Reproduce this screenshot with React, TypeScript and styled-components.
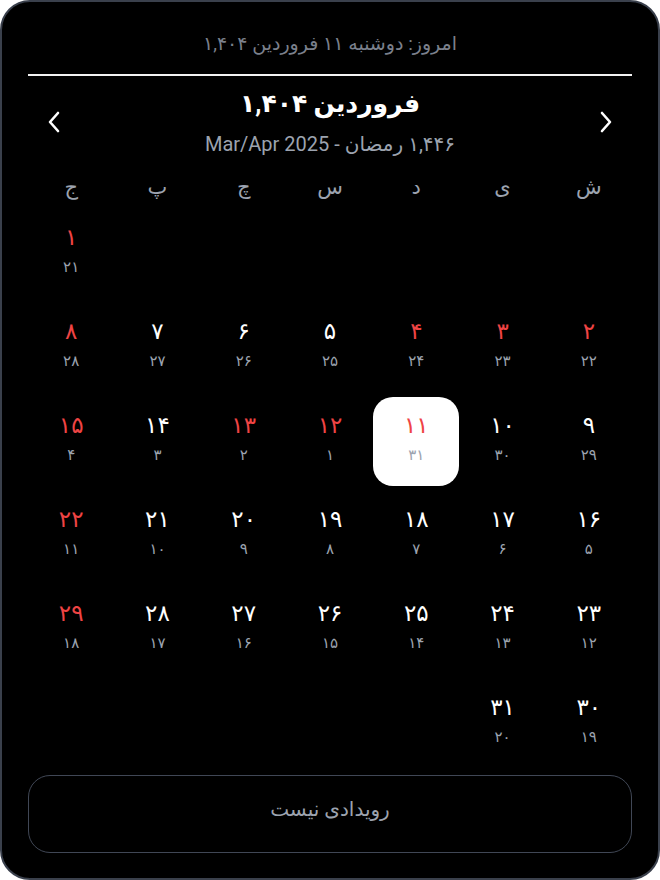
import React from "react";
import styled, { createGlobalStyle } from "styled-components";

const GlobalStyle = createGlobalStyle`
  body {
    margin: 0;
    background: #ffffff;
    font-family: Roboto, "Noto Sans", "DejaVu Sans", sans-serif;
  }
`;

const Frame = styled.div`
  box-sizing: border-box;
  width: 660px;
  height: 880px;
  padding: 0 26px;
  background: #000000;
  border: 2px solid #3a404c;
  border-radius: 30px;
  direction: rtl;
  display: flex;
  flex-direction: column;
  color: #ffffff;
`;

const TodayText = styled.div`
  margin-top: 30px;
  line-height: 24px;
  font-size: 19px;
  text-align: center;
  color: #7b808c;
`;

const Divider = styled.div`
  margin-top: 18px;
  height: 2px;
  background: #f2f2f2;
`;

const MonthBar = styled.div`
  margin-top: 11px;
  display: flex;
  align-items: center;
  justify-content: space-between;
  padding: 0 16px;
`;

const NavButton = styled.button`
  width: 20px;
  height: 28px;
  padding: 0;
  border: none;
  background: transparent;
  display: flex;
  align-items: center;
  justify-content: center;
  cursor: pointer;
`;

const MonthTitle = styled.div`
  display: flex;
  flex-direction: column;
  align-items: center;
`;

const TitleText = styled.div`
  font-size: 25px;
  font-weight: 700;
  line-height: 34px;
`;

const SubText = styled.div`
  margin-top: 10px;
  font-size: 20px;
  line-height: 26px;
  color: #9ca3af;
`;

const Weekdays = styled.div`
  margin-top: 16px;
  display: grid;
  grid-template-columns: repeat(7, 1fr);
`;

const Weekday = styled.div`
  text-align: center;
  font-size: 21px;
  line-height: 28px;
  color: #9ca3af;
`;

const Grid = styled.div`
  margin-top: 8px;
  display: grid;
  grid-template-columns: repeat(7, 1fr);
  grid-auto-rows: 89px;
  row-gap: 5px;
`;

const Cell = styled.div<{ $today?: boolean; $col: number }>`
  grid-column: ${({ $col }) => $col};
  display: flex;
  flex-direction: column;
  align-items: center;
  justify-content: center;
  gap: 4px;
  padding-bottom: 6px;
  box-sizing: border-box;
  border-radius: 20px;
  background: ${({ $today }) => ($today ? "#ffffff" : "transparent")};
`;

const DayNum = styled.div<{ $holiday?: boolean }>`
  font-size: 23px;
  font-weight: 500;
  line-height: 28px;
  color: ${({ $holiday }) => ($holiday ? "#ef4444" : "#ffffff")};
`;

const GregNum = styled.div`
  font-size: 15px;
  line-height: 22px;
  color: #9ca3af;
`;

const EventBox = styled.div`
  margin-top: 7px;
  height: 78px;
  padding-bottom: 10px;
  box-sizing: border-box;
  border: 1.5px solid #404755;
  border-radius: 22px;
  display: flex;
  align-items: center;
  justify-content: center;
  font-size: 20px;
  color: #9ca3af;
`;

const fa = (n: number) => String(n).replace(/\d/g, (d) => "۰۱۲۳۴۵۶۷۸۹"[+d]);

const WEEKDAYS = ["ش", "ی", "د", "س", "چ", "پ", "ج"];
const HOLIDAYS = [1, 2, 3, 4, 8, 11, 12, 13, 15, 22, 29];
const START = 6; // 1 Farvardin falls on Friday

const Chevron = ({ dir }: { dir: "left" | "right" }) => (
  <svg width="14" height="24" viewBox="0 0 14 24" fill="none">
    <path
      d={dir === "left" ? "M11 3 L3 12 L11 21" : "M3 3 L11 12 L3 21"}
      stroke="#ffffff"
      strokeWidth="2.6"
      strokeLinecap="round"
      strokeLinejoin="round"
    />
  </svg>
);

export default function App() {
  const days = Array.from({ length: 31 }, (_, i) => i + 1);

  return (
    <>
      <GlobalStyle />
      <Frame>
        <TodayText>امروز: دوشنبه ۱۱ فروردین ۱,۴۰۴</TodayText>
        <Divider />
        <MonthBar>
          <NavButton>
            <Chevron dir="right" />
          </NavButton>
          <MonthTitle>
            <TitleText>فروردین ۱,۴۰۴</TitleText>
            <SubText>
              ۱,۴۴۶ رمضان - <span dir="ltr">Mar/Apr 2025</span>
            </SubText>
          </MonthTitle>
          <NavButton>
            <Chevron dir="left" />
          </NavButton>
        </MonthBar>
        <Weekdays>
          {WEEKDAYS.map((w) => (
            <Weekday key={w}>{w}</Weekday>
          ))}
        </Weekdays>
        <Grid>
          {days.map((d) => {
            const col = ((START + d - 1) % 7) + 1;
            const greg = d <= 11 ? 20 + d : d - 11;
            return (
              <Cell key={d} $col={col} $today={d === 11}>
                <DayNum $holiday={HOLIDAYS.includes(d)}>{fa(d)}</DayNum>
                <GregNum>{fa(greg)}</GregNum>
              </Cell>
            );
          })}
        </Grid>
        <EventBox>رویدادی نیست</EventBox>
      </Frame>
    </>
  );
}
